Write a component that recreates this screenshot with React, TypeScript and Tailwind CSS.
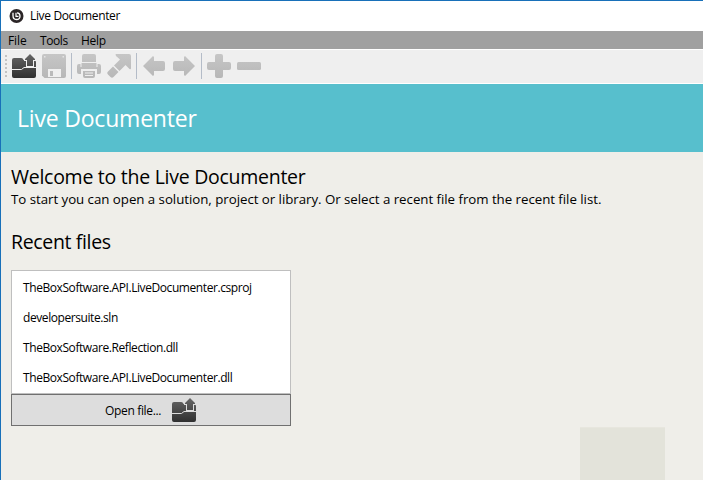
import React from "react";

const FolderIcon = ({ line }: { line: string }) => (
  <svg width="24" height="24" viewBox="0 0 24 24" className="block shrink-0 overflow-visible">
    <defs>
      <linearGradient id="dark" x1="0" y1="0" x2="0" y2="24" gradientUnits="userSpaceOnUse">
        <stop offset="0" stopColor="#666" />
        <stop offset="1" stopColor="#303030" />
      </linearGradient>
    </defs>
    <path d="M0 6Q0 4 2 4H9Q10.500 4 11 5L11.500 6H22Q24 6 24 8V22Q24 24 22 24H2Q0 24 0 22Z" fill="url(#dark)" />
    <path d="M0 15.500H9.500L12 13.500H24" fill="none" stroke={line} strokeWidth="1" />
    <path d="M18 -0.800L24 5.500V7H22V13H14V7H12V5.500Z" fill={line} />
    <path d="M18 0L23 5V6H21V12H15V6H13V5Z" fill="url(#dark)" />
  </svg>
);

const Grey = ({ children }: { children: React.ReactNode }) => (
  <svg width="24" height="24" viewBox="0 0 24 24" className="block shrink-0">
    <defs>
      <linearGradient id="grey" x1="0" y1="0" x2="0" y2="24" gradientUnits="userSpaceOnUse">
        <stop offset="0" stopColor="#c6c6c6" />
        <stop offset="1" stopColor="#b7b7b7" />
      </linearGradient>
    </defs>
    <g fill="url(#grey)">{children}</g>
  </svg>
);

const Separator = () => <div className="mx-[5px] h-[26px] w-px shrink-0 bg-[#b4bcc8]" />;

const recent = [
  "TheBoxSoftware.API.LiveDocumenter.csproj",
  "developersuite.sln",
  "TheBoxSoftware.Reflection.dll",
  "TheBoxSoftware.API.LiveDocumenter.dll",
];

export default function App() {
  return (
    <div className="flex h-[480px] w-[703px] flex-col overflow-hidden whitespace-nowrap border-l border-t border-[#1870b9] bg-[#efeee9] font-['Open_Sans','Noto_Sans',sans-serif] text-[12px] tracking-[-0.42px] text-black">
      <header className="flex h-[30px] shrink-0 items-center bg-white pl-2">
        <svg width="15" height="15" viewBox="0 0 15 15" className="mr-[6px] block">
          <circle cx="7.500" cy="7" r="7" fill="#2b2527" />
          <path d="M4 3.800V6.500Q4 10.500 7.500 10.500T11 7Q11 3.800 8 3.800" fill="none" stroke="#fff" strokeWidth="1.300" />
          <path d="M7 3.800V7.300H9.500" fill="none" stroke="#fff" strokeWidth="1.200" />
        </svg>
        <span className="tracking-[-0.35px]">Live Documenter</span>
      </header>
      <nav className="flex h-[18px] shrink-0 items-center bg-[#a0a0a0] pl-[7px] pt-px leading-[18px]">
        <span className="w-8 tracking-[-0.1px]">File</span>
        <span className="w-[41px]">Tools</span>
        <span className="tracking-[-0.3px]">Help</span>
      </nav>
      <div className="flex h-[35px] shrink-0 items-center border-y border-white bg-[#efefef] pb-px pl-1">
        <div className="mr-[5px] flex w-[2px] flex-col gap-[2px]">
          {[0, 1, 2, 3, 4, 5].map((i) => (
            <i key={i} className="h-[2px] w-[2px] bg-[#c3c3c3]" />
          ))}
        </div>
        <FolderIcon line="#efefef" />
        <div className="w-[6px]" />
        <Grey>
          <path d="M2 0H22Q24 0 24 2V22Q24 24 22 24H2.500L0 21.500V2Q0 0 2 0Z" />
          <path d="M6 15H19V23H6Z" fill="#efefef" />
          <path d="M8 17H11V22H8Z" />
          <path d="M2 2H3.500V3.500H2ZM20.500 2H22V3.500H20.500Z" fill="#e4e4e4" />
        </Grey>
        <Separator />
        <Grey>
          <path d="M7 0H17Q19 0 19 2V8H5V2Q5 0 7 0Z" />
          <path d="M2 10H3.500V13H20.500V10H22Q24 10 24 12V18Q24 20 22 20H20V15H4V20H2Q0 20 0 18V12Q0 10 2 10Z" />
          <path d="M4.500 9H19.500V13H4.500Z" />
          <path d="M6 17H18V22Q18 24 16 24H8Q6 24 6 22ZM8 18.500V19.500H16V18.500ZM8 21V22H16V21Z" fillRule="evenodd" />
        </Grey>
        <div className="w-[6px]" />
        <Grey>
          <path d="M9 0H22Q24 0 24 2V14Q24 16 22.500 15L18.500 11L12.500 17L7 11.500L13 5.500L9 2Q8 0 9 0Z" />
          <path d="M6 12.500L11.500 18L6.500 23Q5 24.500 3.500 23L1 20.500Q-.5 19 1 17.500Z" />
        </Grey>
        <Separator />
        <Grey>
          <path d="M1 12L11 2L12 3V7H21Q23 7 23 9V15Q23 17 21 17H12V21L11 22Z" />
        </Grey>
        <div className="w-[6px]" />
        <Grey>
          <path d="M23 12L13 2L12 3V7H3Q1 7 1 9V15Q1 17 3 17H12V21L13 22Z" />
        </Grey>
        <Separator />
        <Grey>
          <path d="M10 0H14Q16 0 16 2V8H22Q24 8 24 10V14Q24 16 22 16H16V22Q16 24 14 24H10Q8 24 8 22V16H2Q0 16 0 14V10Q0 8 2 8H8V2Q8 0 10 0Z" />
        </Grey>
        <div className="w-[6px]" />
        <Grey>
          <rect y="8" width="24" height="8" rx="1.500" />
        </Grey>
      </div>
      <section className="flex h-[68px] shrink-0 items-center bg-[#57bfcd] pl-4 pt-px text-[23px] tracking-[-0.2px] text-white">
        <h1>Live Documenter</h1>
      </section>
      <main className="relative flex-1 pl-[10px]">
        <h2 className="pt-3 text-[19.5px] leading-[26px] tracking-[-0.27px]">Welcome to the Live Documenter</h2>
        <p className="text-[13.3px] leading-[18px] tracking-[-0.04px]">
          To start you can open a solution, project or library. Or select a recent file from the recent file list.
        </p>
        <h2 className="mt-[21px] text-[19.5px] leading-[26px] tracking-[-0.35px]">Recent files</h2>
        <ul className="mt-[15px] h-[124px] w-[280px] border border-[#bfbfbf] bg-white pl-[11px] pt-[2px]">
          {recent.map((name) => (
            <li key={name} className="h-[30px] leading-[30px]">
              {name}
            </li>
          ))}
        </ul>
        <button className="flex h-8 w-[280px] items-center border border-[#707070] bg-[#ddd] pl-[93px]">
          <span className="w-[67px] pt-px text-left tracking-[-0.34px]">Open file...</span>
          <FolderIcon line="#ddd" />
        </button>
        <div className="absolute bottom-0 left-[579px] h-[52px] w-[85px] border-t border-[#e7e6de] bg-[#e3e3da] box-content" />
      </main>
    </div>
  );
}
